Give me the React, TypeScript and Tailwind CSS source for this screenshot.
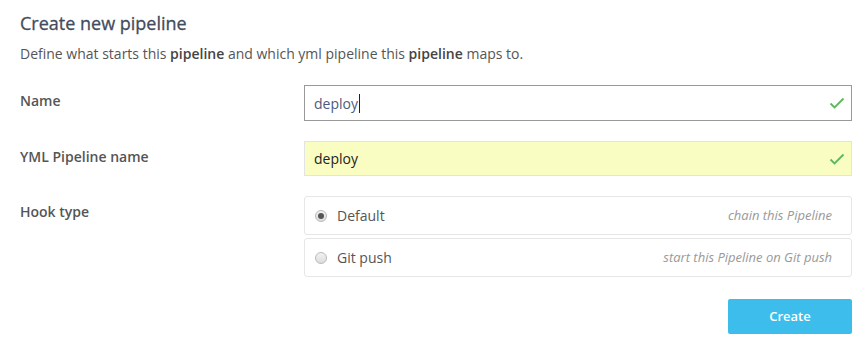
import React from "react";

const Check = () => (
  <svg width="16" height="12" viewBox="0 0 16 12" className="shrink-0">
    <path d="M1.5 6.5 L5.5 10.5 L14.5 1.5" fill="none" stroke="#5cb85c" strokeWidth="1.8" />
  </svg>
);

const Radio = ({ checked }: { checked?: boolean }) => (
  <span className="relative flex h-[12px] w-[12px] shrink-0 items-center justify-center rounded-full border border-[#b9b9b9] bg-gradient-to-b from-[#f2f2f2] to-[#dcdcdc]">
    {checked && <span className="h-[6px] w-[6px] rounded-full bg-[#555]" />}
  </span>
);

export default function App() {
  return (
    <div
      className="h-[349px] w-[864px] bg-white pl-[20px] pr-[12px] pt-[10px]"
      style={{ fontFamily: '"Open Sans", "Noto Sans", Arial, sans-serif' }}
    >
      <h1 className="text-[18px] font-normal leading-[26px] text-[#434b5c] [-webkit-text-stroke:0.3px_#434b5c]">Create new pipeline</h1>
      <p className="mt-[8px] text-[14px] leading-[20px] text-[#555]">
        Define what starts this <b className="font-semibold text-[#444]">pipeline</b> and which yml pipeline this{" "}
        <b className="font-semibold text-[#444]">pipeline</b> maps to.
      </p>

      <div className="mt-[21px] flex flex-col gap-[20px]">
        <div className="flex">
          <div className="w-[284px] pt-[6px] text-[14px] font-semibold leading-[20px] text-[#555]">Name</div>
          <div className="flex h-[36px] flex-1 items-center border border-[#999] bg-white pl-[9px] pr-[6px]">
            <span className="text-[14px] text-[#4d5b80]">deploy</span>
            <span className="ml-[1px] h-[19px] w-[1px] bg-[#222]" />
            <span className="flex-1" />
            <Check />
          </div>
        </div>

        <div className="flex">
          <div className="w-[284px] pt-[6px] text-[14px] font-semibold leading-[20px] text-[#555]">YML Pipeline name</div>
          <div className="flex h-[35px] flex-1 items-center border border-[#e3e3e3] bg-[#fafdc2] pl-[9px] pr-[6px]">
            <span className="flex-1 text-[14px] text-[#222]">deploy</span>
            <Check />
          </div>
        </div>

        <div className="flex">
          <div className="w-[284px] pt-[6px] text-[14px] font-semibold leading-[20px] text-[#555]">Hook type</div>
          <div className="flex flex-1 flex-col gap-[3px]">
            <div className="flex h-[39px] items-center rounded-[3px] border border-[#e6e6e6] pl-[10px] pr-[19px]">
              <Radio checked />
              <span className="ml-[10px] flex-1 text-[14px] text-[#555]">Default</span>
              <span className="text-[13px] italic text-[#999]">chain this Pipeline</span>
            </div>
            <div className="flex h-[39px] items-center rounded-[3px] border border-[#e6e6e6] pl-[10px] pr-[19px]">
              <Radio />
              <span className="ml-[10px] flex-1 text-[14px] text-[#555]">Git push</span>
              <span className="text-[13px] italic text-[#999]">start this Pipeline on Git push</span>
            </div>
          </div>
        </div>
      </div>

      <div className="mt-[22px] flex justify-end">
        <button className="h-[35px] w-[124px] rounded-[2px] bg-[#3dbdec] text-[13px] font-semibold text-white">
          Create
        </button>
      </div>
    </div>
  );
}
